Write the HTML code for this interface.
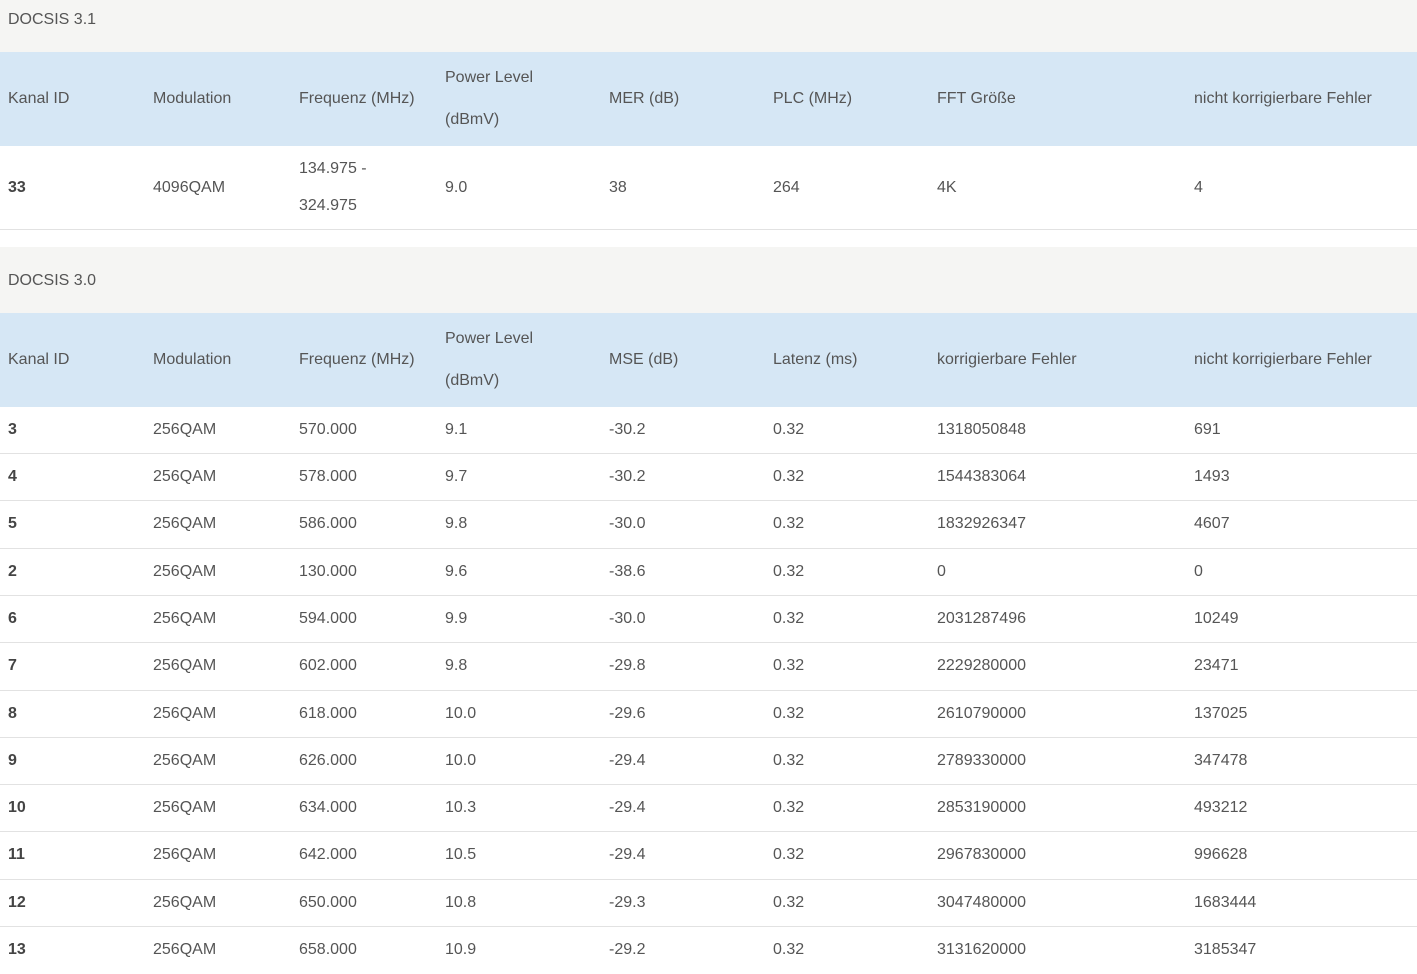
<!DOCTYPE html>
<html><head><meta charset="utf-8"><style>
*{margin:0;padding:0;box-sizing:border-box}
body{width:1417px;height:972px;overflow:hidden;background:#fff;font-family:"Liberation Sans",sans-serif;font-size:16px;color:#555}
.sec{position:absolute;left:0;width:1417px;background:#f5f5f3}
.sec span{position:absolute;left:8px}
.hd{position:absolute;left:0;width:1417px;background:#d6e7f5}
.row{position:absolute;left:0;width:1417px;border-bottom:1px solid #e2e2e2}
.c{position:absolute;white-space:nowrap}
b{font-weight:bold;color:#444}
</style></head><body>
<div class="sec" style="top:0;height:52px"><span style="top:11px">DOCSIS 3.1</span></div>
<div class="hd" style="top:52px;height:94px">
<div class="c" style="left:8px;top:38px">Kanal ID</div>
<div class="c" style="left:153px;top:38px">Modulation</div>
<div class="c" style="left:299px;top:38px">Frequenz (MHz)</div>
<div class="c" style="left:445px;top:17px">Power Level</div>
<div class="c" style="left:445px;top:59px">(dBmV)</div>
<div class="c" style="left:609px;top:38px">MER (dB)</div>
<div class="c" style="left:773px;top:38px">PLC (MHz)</div>
<div class="c" style="left:937px;top:38px">FFT Größe</div>
<div class="c" style="left:1194px;top:38px">nicht korrigierbare Fehler</div>
</div>
<div class="row" style="top:146px;height:84px">
<div class="c" style="left:8px;top:33px"><b>33</b></div>
<div class="c" style="left:153px;top:33px">4096QAM</div>
<div class="c" style="left:299px;top:14px">134.975 -</div>
<div class="c" style="left:299px;top:51px">324.975</div>
<div class="c" style="left:445px;top:33px">9.0</div>
<div class="c" style="left:609px;top:33px">38</div>
<div class="c" style="left:773px;top:33px">264</div>
<div class="c" style="left:937px;top:33px">4K</div>
<div class="c" style="left:1194px;top:33px">4</div>
</div>
<div class="sec" style="top:247px;height:66px"><span style="top:25px">DOCSIS 3.0</span></div>
<div class="hd" style="top:313px;height:94px">
<div class="c" style="left:8px;top:38px">Kanal ID</div>
<div class="c" style="left:153px;top:38px">Modulation</div>
<div class="c" style="left:299px;top:38px">Frequenz (MHz)</div>
<div class="c" style="left:445px;top:17px">Power Level</div>
<div class="c" style="left:445px;top:59px">(dBmV)</div>
<div class="c" style="left:609px;top:38px">MSE (dB)</div>
<div class="c" style="left:773px;top:38px">Latenz (ms)</div>
<div class="c" style="left:937px;top:38px">korrigierbare Fehler</div>
<div class="c" style="left:1194px;top:38px">nicht korrigierbare Fehler</div>
</div>
<div id="rows"></div>
<div class="row" style="top:407px;height:47px"><div class="c" style="left:8px;top:14px"><b>3</b></div><div class="c" style="left:153px;top:14px">256QAM</div><div class="c" style="left:299px;top:14px">570.000</div><div class="c" style="left:445px;top:14px">9.1</div><div class="c" style="left:609px;top:14px">-30.2</div><div class="c" style="left:773px;top:14px">0.32</div><div class="c" style="left:937px;top:14px">1318050848</div><div class="c" style="left:1194px;top:14px">691</div></div>
<div class="row" style="top:454px;height:47px"><div class="c" style="left:8px;top:14px"><b>4</b></div><div class="c" style="left:153px;top:14px">256QAM</div><div class="c" style="left:299px;top:14px">578.000</div><div class="c" style="left:445px;top:14px">9.7</div><div class="c" style="left:609px;top:14px">-30.2</div><div class="c" style="left:773px;top:14px">0.32</div><div class="c" style="left:937px;top:14px">1544383064</div><div class="c" style="left:1194px;top:14px">1493</div></div>
<div class="row" style="top:501px;height:48px"><div class="c" style="left:8px;top:14px"><b>5</b></div><div class="c" style="left:153px;top:14px">256QAM</div><div class="c" style="left:299px;top:14px">586.000</div><div class="c" style="left:445px;top:14px">9.8</div><div class="c" style="left:609px;top:14px">-30.0</div><div class="c" style="left:773px;top:14px">0.32</div><div class="c" style="left:937px;top:14px">1832926347</div><div class="c" style="left:1194px;top:14px">4607</div></div>
<div class="row" style="top:549px;height:47px"><div class="c" style="left:8px;top:14px"><b>2</b></div><div class="c" style="left:153px;top:14px">256QAM</div><div class="c" style="left:299px;top:14px">130.000</div><div class="c" style="left:445px;top:14px">9.6</div><div class="c" style="left:609px;top:14px">-38.6</div><div class="c" style="left:773px;top:14px">0.32</div><div class="c" style="left:937px;top:14px">0</div><div class="c" style="left:1194px;top:14px">0</div></div>
<div class="row" style="top:596px;height:47px"><div class="c" style="left:8px;top:14px"><b>6</b></div><div class="c" style="left:153px;top:14px">256QAM</div><div class="c" style="left:299px;top:14px">594.000</div><div class="c" style="left:445px;top:14px">9.9</div><div class="c" style="left:609px;top:14px">-30.0</div><div class="c" style="left:773px;top:14px">0.32</div><div class="c" style="left:937px;top:14px">2031287496</div><div class="c" style="left:1194px;top:14px">10249</div></div>
<div class="row" style="top:643px;height:48px"><div class="c" style="left:8px;top:14px"><b>7</b></div><div class="c" style="left:153px;top:14px">256QAM</div><div class="c" style="left:299px;top:14px">602.000</div><div class="c" style="left:445px;top:14px">9.8</div><div class="c" style="left:609px;top:14px">-29.8</div><div class="c" style="left:773px;top:14px">0.32</div><div class="c" style="left:937px;top:14px">2229280000</div><div class="c" style="left:1194px;top:14px">23471</div></div>
<div class="row" style="top:691px;height:47px"><div class="c" style="left:8px;top:14px"><b>8</b></div><div class="c" style="left:153px;top:14px">256QAM</div><div class="c" style="left:299px;top:14px">618.000</div><div class="c" style="left:445px;top:14px">10.0</div><div class="c" style="left:609px;top:14px">-29.6</div><div class="c" style="left:773px;top:14px">0.32</div><div class="c" style="left:937px;top:14px">2610790000</div><div class="c" style="left:1194px;top:14px">137025</div></div>
<div class="row" style="top:738px;height:47px"><div class="c" style="left:8px;top:14px"><b>9</b></div><div class="c" style="left:153px;top:14px">256QAM</div><div class="c" style="left:299px;top:14px">626.000</div><div class="c" style="left:445px;top:14px">10.0</div><div class="c" style="left:609px;top:14px">-29.4</div><div class="c" style="left:773px;top:14px">0.32</div><div class="c" style="left:937px;top:14px">2789330000</div><div class="c" style="left:1194px;top:14px">347478</div></div>
<div class="row" style="top:785px;height:47px"><div class="c" style="left:8px;top:14px"><b>10</b></div><div class="c" style="left:153px;top:14px">256QAM</div><div class="c" style="left:299px;top:14px">634.000</div><div class="c" style="left:445px;top:14px">10.3</div><div class="c" style="left:609px;top:14px">-29.4</div><div class="c" style="left:773px;top:14px">0.32</div><div class="c" style="left:937px;top:14px">2853190000</div><div class="c" style="left:1194px;top:14px">493212</div></div>
<div class="row" style="top:832px;height:48px"><div class="c" style="left:8px;top:14px"><b>11</b></div><div class="c" style="left:153px;top:14px">256QAM</div><div class="c" style="left:299px;top:14px">642.000</div><div class="c" style="left:445px;top:14px">10.5</div><div class="c" style="left:609px;top:14px">-29.4</div><div class="c" style="left:773px;top:14px">0.32</div><div class="c" style="left:937px;top:14px">2967830000</div><div class="c" style="left:1194px;top:14px">996628</div></div>
<div class="row" style="top:880px;height:47px"><div class="c" style="left:8px;top:14px"><b>12</b></div><div class="c" style="left:153px;top:14px">256QAM</div><div class="c" style="left:299px;top:14px">650.000</div><div class="c" style="left:445px;top:14px">10.8</div><div class="c" style="left:609px;top:14px">-29.3</div><div class="c" style="left:773px;top:14px">0.32</div><div class="c" style="left:937px;top:14px">3047480000</div><div class="c" style="left:1194px;top:14px">1683444</div></div>
<div class="row" style="top:927px;height:47px;border:none"><div class="c" style="left:8px;top:14px"><b>13</b></div><div class="c" style="left:153px;top:14px">256QAM</div><div class="c" style="left:299px;top:14px">658.000</div><div class="c" style="left:445px;top:14px">10.9</div><div class="c" style="left:609px;top:14px">-29.2</div><div class="c" style="left:773px;top:14px">0.32</div><div class="c" style="left:937px;top:14px">3131620000</div><div class="c" style="left:1194px;top:14px">3185347</div></div>
</body></html>
